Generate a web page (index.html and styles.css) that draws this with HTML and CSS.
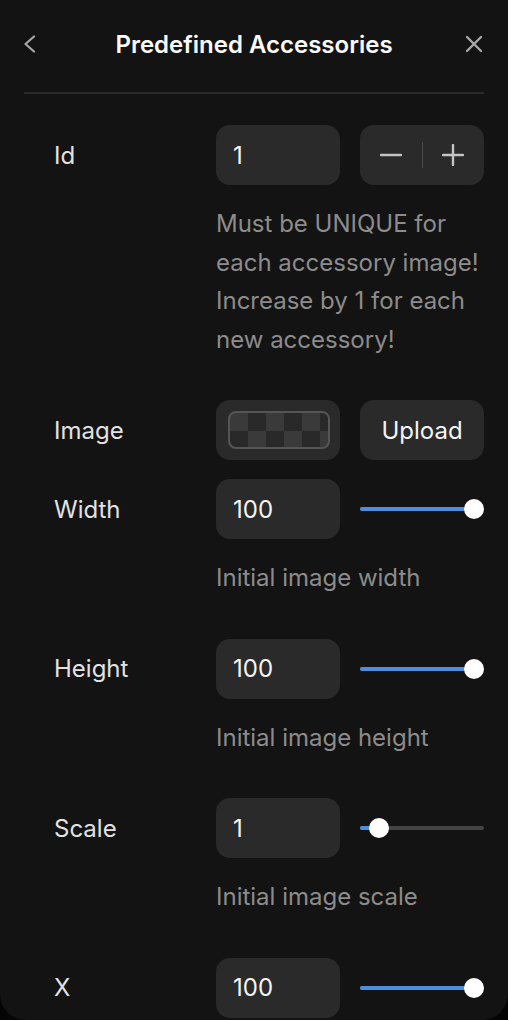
FILE: index.html
```html
<!DOCTYPE html>
<html lang="en">
<head>
    <meta charset="UTF-8">
    <meta name="viewport" content="width=device-width, initial-scale=1.0">
    <title>Predefined Accessories</title>
    <link rel="stylesheet" href="styles.css">
</head>
<body>
    <div class="panel">
        <header class="top">
            <span class="icon-btn back">
                <svg width="14" height="18" viewBox="0 0 14 18"><path d="M10 1.5 L1.5 9 L10 16.5" fill="none" stroke="#a8a8a8" stroke-width="2.2" stroke-linecap="round" stroke-linejoin="round"/></svg>
            </span>
            <h1>Predefined Accessories</h1>
            <span class="icon-btn">
                <svg width="18" height="18" viewBox="0 0 18 18"><path d="M2 2 L16 16 M16 2 L2 16" fill="none" stroke="#a8a8a8" stroke-width="2.4" stroke-linecap="round"/></svg>
            </span>
        </header>

        <div class="form">
            <div class="group">
                <div class="row">
                    <span class="label">Id</span>
                    <div class="box">1</div>
                    <div class="box stepper">
                        <svg width="22" height="22" viewBox="0 0 22 22"><path d="M1 11 H21" stroke="#c4c4c4" stroke-width="2.4" stroke-linecap="round"/></svg>
                        <span class="sep"></span>
                        <svg width="22" height="22" viewBox="0 0 22 22"><path d="M1 11 H21 M11 1 V21" stroke="#c4c4c4" stroke-width="2.4" stroke-linecap="round"/></svg>
                    </div>
                </div>
                <p class="help">Must be UNIQUE for each accessory image! Increase by 1 for each new accessory!</p>
            </div>

            <div class="row">
                <span class="label">Image</span>
                <div class="box preview"><div class="checker"></div></div>
                <div class="box button">Upload</div>
            </div>

            <div class="group">
                <div class="row">
                    <span class="label">Width</span>
                    <div class="box">100</div>
                    <div class="slider"><div class="fill" style="width: 92%"></div><div class="thumb" style="left: 92%"></div></div>
                </div>
                <p class="help">Initial image width</p>
            </div>

            <div class="group">
                <div class="row">
                    <span class="label">Height</span>
                    <div class="box">100</div>
                    <div class="slider"><div class="fill" style="width: 92%"></div><div class="thumb" style="left: 92%"></div></div>
                </div>
                <p class="help">Initial image height</p>
            </div>

            <div class="group">
                <div class="row">
                    <span class="label">Scale</span>
                    <div class="box">1</div>
                    <div class="slider"><div class="fill" style="width: 15%"></div><div class="thumb" style="left: 15%"></div></div>
                </div>
                <p class="help">Initial image scale</p>
            </div>

            <div class="row">
                <span class="label">X</span>
                <div class="box">100</div>
                <div class="slider"><div class="fill" style="width: 92%"></div><div class="thumb" style="left: 92%"></div></div>
            </div>
        </div>
    </div>
</body>
</html>
```

FILE: styles.css
```css
html, body {
    margin: 0;
    padding: 0;
    background: #050505;
}

body {
    font-family: Inter, "Noto Sans", sans-serif;
    color: #e6e6e6;
}

.panel {
    width: 508px;
    height: 1020px;
    box-sizing: border-box;
    padding: 0 24px;
    background: #131313;
    border-radius: 0 0 26px 26px;
    overflow: hidden;
}

.top {
    height: 94px;
    display: flex;
    align-items: center;
    justify-content: space-between;
    border-bottom: 2px solid #2a2a2a;
    box-sizing: border-box;
    padding-bottom: 4px;
}

.top h1 {
    margin: 0;
    font-size: 24px;
    font-weight: 600;
    color: #fafafa;
}

.icon-btn {
    width: 20px;
    display: flex;
    justify-content: center;
}

.back {
    justify-content: flex-start;
}

.form {
    padding: 31px 0 0 30px;
    display: flex;
    flex-direction: column;
    gap: 19px;
}

.group {
    padding-bottom: 22px;
}

.row {
    display: grid;
    grid-template-columns: 142px 124px 124px;
    column-gap: 20px;
    align-items: center;
}

.label {
    font-size: 24px;
    color: #e2e2e2;
}

.box {
    height: 60px;
    border-radius: 14px;
    background: #2a2a2a;
    box-sizing: border-box;
    padding: 0 17px;
    display: flex;
    align-items: center;
    font-size: 24px;
    color: #f4f4f4;
}

.stepper {
    justify-content: space-between;
    padding: 0 20px;
}

.sep {
    width: 1px;
    height: 26px;
    background: #4a4a4a;
}

.preview {
    padding: 0 10px 0 12px;
}

.checker {
    width: 100%;
    height: 38px;
    box-sizing: border-box;
    border: 2px solid #555;
    border-radius: 8px;
    background-color: #3a3a3a;
    background-image:
        linear-gradient(45deg, #292929 25%, transparent 25%, transparent 75%, #292929 75%),
        linear-gradient(45deg, #292929 25%, transparent 25%, transparent 75%, #292929 75%);
    background-size: 36px 36px;
    background-position: 0 0, 18px 18px;
}

.button {
    justify-content: center;
}

.slider {
    position: relative;
    height: 4px;
    border-radius: 2px;
    background: #444;
}

.fill {
    height: 4px;
    border-radius: 2px;
    background: #4d8ee0;
}

.thumb {
    position: absolute;
    top: 50%;
    width: 20px;
    height: 20px;
    margin: -10px 0 0 -10px;
    border-radius: 50%;
    background: #fff;
}

.help {
    margin: 20px 0 0 162px;
    width: 268px;
    font-size: 24px;
    line-height: 38.5px;
    color: #8c8c8c;
}
```
